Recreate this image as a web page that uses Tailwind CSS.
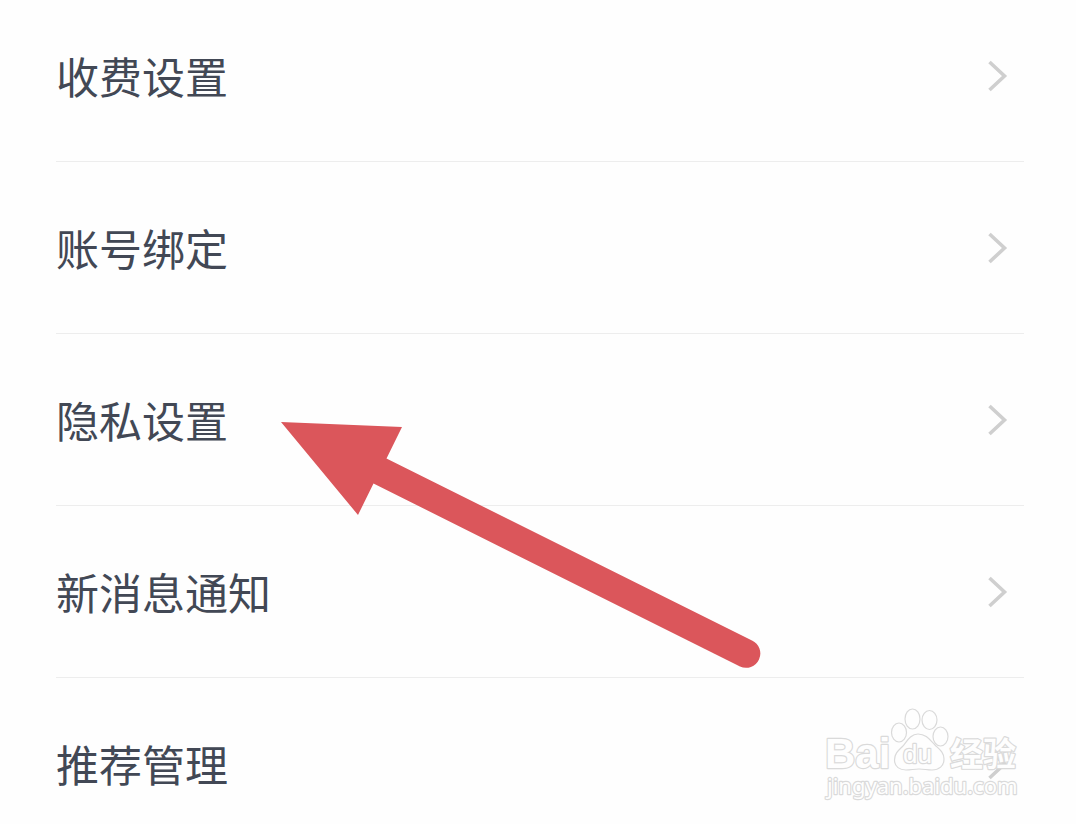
<!DOCTYPE html>
<html lang="zh-CN">
<head>
  <meta charset="UTF-8" />
  <meta name="viewport" content="width=device-width, initial-scale=1.0" />
  <title>设置</title>
  <script src="https://cdn.jsdelivr.net/npm/@tailwindcss/browser@4"></script>
</head>
<body class="bg-[#fefefe] font-['Noto_Sans_CJK_SC',sans-serif] text-[#424855]">

  <main class="relative h-screen overflow-hidden">

    <!-- Settings list -->
    <ul class="-mt-2.5 pl-14 pr-[52px] text-[43px] leading-[60px]">
      <li class="border-b border-[#ededed]">
        <a href="#" class="flex h-[171px] items-center justify-between pr-4">
          <span class="pb-0.5">收费设置</span>
          <svg class="h-8 w-5" viewBox="0 0 20 32" fill="none" stroke="#cfcfcf" stroke-width="3.6"><path d="M1.500 2L16.500 16L1.500 30" /></svg>
        </a>
      </li>
      <li class="border-b border-[#ededed]">
        <a href="#" class="flex h-[171px] items-center justify-between pr-4">
          <span class="pb-0.5">账号绑定</span>
          <svg class="h-8 w-5" viewBox="0 0 20 32" fill="none" stroke="#cfcfcf" stroke-width="3.6"><path d="M1.500 2L16.500 16L1.500 30" /></svg>
        </a>
      </li>
      <li class="border-b border-[#ededed]">
        <a href="#" class="flex h-[171px] items-center justify-between pr-4">
          <span class="pb-0.5">隐私设置</span>
          <svg class="h-8 w-5" viewBox="0 0 20 32" fill="none" stroke="#cfcfcf" stroke-width="3.6"><path d="M1.500 2L16.500 16L1.500 30" /></svg>
        </a>
      </li>
      <li class="border-b border-[#ededed]">
        <a href="#" class="flex h-[171px] items-center justify-between pr-4">
          <span class="pb-0.5">新消息通知</span>
          <svg class="h-8 w-5" viewBox="0 0 20 32" fill="none" stroke="#cfcfcf" stroke-width="3.6"><path d="M1.500 2L16.500 16L1.500 30" /></svg>
        </a>
      </li>
      <li>
        <a href="#" class="flex h-[171px] items-center justify-between pr-4">
          <span class="pb-0.5">推荐管理</span>
          <svg class="h-8 w-5" viewBox="0 0 20 32" fill="none" stroke="#cfcfcf" stroke-width="3.6"><path d="M1.500 2L16.500 16L1.500 30" /></svg>
        </a>
      </li>
    </ul>

    <!-- Arrow pointing at the privacy row -->
    <svg class="pointer-events-none absolute left-[280px] top-[420px] h-[250px] w-[482px]" viewBox="280 420 482 250" fill="#db565b">
      <path d="M281 422L402 427L386.500 458.500L752 640.500A14 14 0 0 1 740 666.500L373.500 483.500L358 515Z" />
    </svg>

    <!-- Watermark -->
    <svg class="pointer-events-none absolute bottom-3.5 right-[46px] h-[110px] w-[220px]" viewBox="0 0 220 110" fill="#fefefe" stroke="#dadada" stroke-width="1.2">
      <ellipse cx="89" cy="32.500" rx="7.500" ry="9.500" />
      <ellipse cx="102.500" cy="19" rx="7.500" ry="10" />
      <ellipse cx="119.500" cy="20" rx="7.500" ry="9.500" />
      <ellipse cx="130.500" cy="36.500" rx="7.500" ry="9.500" />
      <path d="M108 34C101 34 97 41 93 46C89 50 84.500 53 84.500 60C84.500 67 90 70 96 70C101 70 104 69 109 69C114 69 117 70 122 70C129 70 134 66 134 59C134 52 129 49 125 45C120 40 116 34 108 34Z" />
      <g stroke-width="2.4" stroke-linejoin="round">
        <text x="15" y="68" class="font-['Liberation_Sans',sans-serif] text-[42px] font-bold [paint-order:stroke]">Bai</text>
        <text x="93" y="63" class="font-['Liberation_Sans',sans-serif] text-[26px] [paint-order:stroke]">du</text>
        <text x="140" y="66" class="font-['Noto_Sans_CJK_SC',sans-serif] text-[33px] font-bold [paint-order:stroke]">经验</text>
        <text x="17" y="94" class="font-['Noto_Sans',sans-serif] text-[22px] [paint-order:stroke]">jingyan.baidu.com</text>
      </g>
    </svg>

  </main>

</body>
</html>
